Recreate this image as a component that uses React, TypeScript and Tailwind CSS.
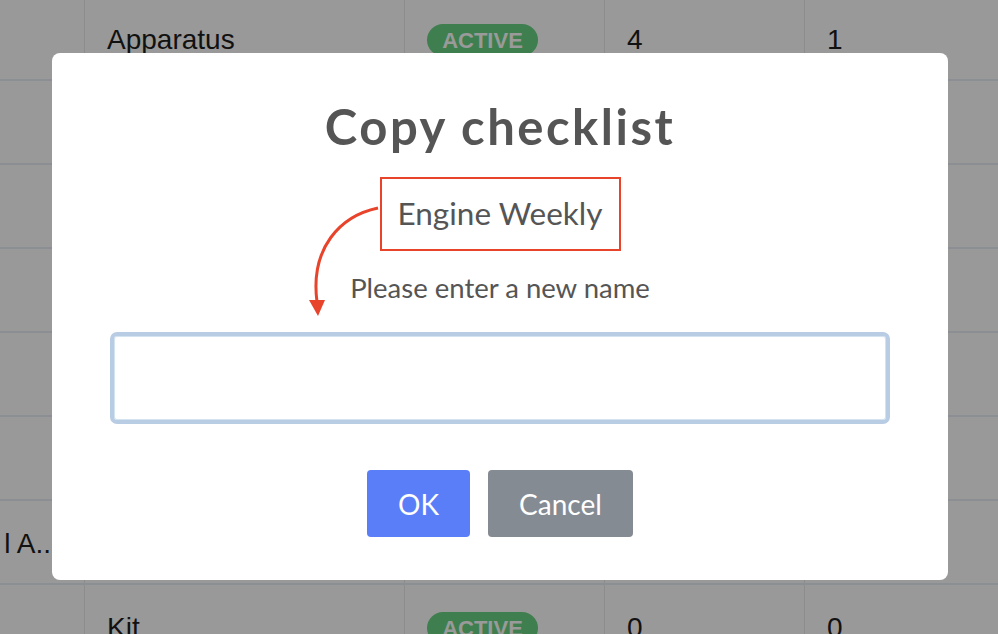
import React from "react";

type Row = { c1?: string; c2?: string; badge?: boolean; c4?: string; c5?: string };

const rows: Row[] = [
  { c2: "Apparatus", badge: true, c4: "4", c5: "1" },
  {},
  {},
  {},
  {},
  {},
  { c1: "l A.." },
  { c2: "Kit", badge: true, c4: "0", c5: "0" },
];

function Badge() {
  return (
    <span className="mt-[4px] inline-flex h-[32px] w-[111px] items-center justify-center rounded-full bg-[#3f7f4f] text-[22px] font-bold text-[#9a9a9a]" style={{ fontFamily: "'Liberation Sans', Arial, sans-serif" }}>
      ACTIVE
    </span>
  );
}

export default function App() {
  return (
    <div className="relative h-[634px] w-[998px] overflow-hidden bg-[#999999]" style={{ fontFamily: "'Liberation Sans', Arial, sans-serif" }}>
      {/* background table */}
      <div className="-mt-[3px] flex flex-col">
        {rows.map((r, i) => (
          <div key={i} className="flex h-[84px] border-b-2 border-[#8b8f94] text-[28px] text-[#111]">
            <div className="flex w-[85px] items-center justify-end overflow-hidden border-r border-[#8c8c8c] pr-[33px] pt-[4px]">
              <span className="whitespace-nowrap">{r.c1}</span>
            </div>
            <div className="flex w-[320px] items-center border-r border-[#8c8c8c] pl-[22px] pt-[4px]">{r.c2}</div>
            <div className="flex w-[200px] items-center border-r border-[#8c8c8c] pl-[22px]">{r.badge ? <Badge /> : null}</div>
            <div className="flex w-[200px] items-center border-r border-[#8c8c8c] pl-[22px] pt-[4px]">{r.c4}</div>
            <div className="flex flex-1 items-center pl-[22px] pt-[4px]">{r.c5}</div>
          </div>
        ))}
      </div>

      {/* modal */}
      <div className="absolute inset-0 flex items-start justify-center pl-[2px] pt-[53px]">
        <div className="relative flex h-[527px] w-[896px] flex-col items-center rounded-[8px] bg-white pt-[45px]" style={{ fontFamily: "Lato, 'Open Sans', sans-serif" }}>
          <h2 className="text-[49px] font-bold leading-[56px] tracking-[2.5px] text-[#555555]">Copy checklist</h2>
          <div className="mt-[23px] flex h-[74px] w-[241px] items-center justify-center border-2 border-[#e8432b] text-[31.5px] text-[#555555]">
            Engine Weekly
          </div>
          <p className="mt-[21px] text-[27.5px] leading-[32px] text-[#555555]">Please enter a new name</p>
          <input className="mt-[28px] h-[92px] w-[780px] rounded-[7px] border-4 border-[#b8cce4] shadow-[inset_0_0_0_1px_#d3e3f0] outline-none" />
          <div className="mt-[46px] flex gap-[18px]">
            <button className="h-[67px] w-[103px] rounded-[4px] bg-[#5a7ef7] text-[28px] text-white">OK</button>
            <button className="h-[67px] w-[145px] rounded-[4px] bg-[#858b92] text-[28px] text-white">Cancel</button>
          </div>
          <svg className="absolute left-0 top-0" width="896" height="527" viewBox="52 53 896 527" fill="none">
            <path d="M378 208 C 340 216, 310 248, 317 302" stroke="#e8432b" strokeWidth="3" fill="none" />
            <polygon points="309,300 325,300 318,316" fill="#e8432b" />
          </svg>
        </div>
      </div>
    </div>
  );
}
